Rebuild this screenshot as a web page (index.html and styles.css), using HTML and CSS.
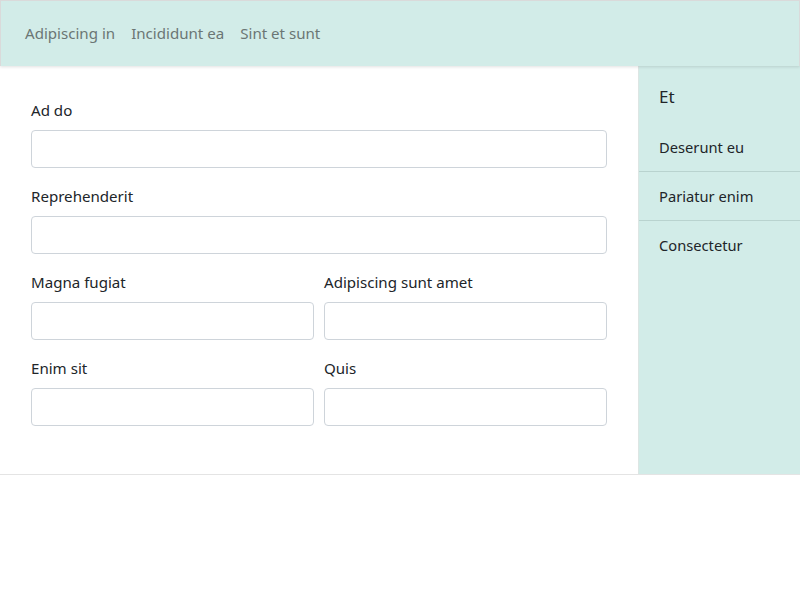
FILE: index.html
```html
<!DOCTYPE html>
<html lang="la">
<head>
<meta charset="utf-8">
<title>Form</title>
<link rel="stylesheet" href="styles.css">
</head>
<body>
<header class="topbar">
  <nav class="nav">
    <a class="nav-link" href="#">Adipiscing in</a>
    <a class="nav-link" href="#">Incididunt ea</a>
    <a class="nav-link" href="#">Sint et sunt</a>
  </nav>
</header>
<div class="layout">
  <main class="content">
    <div class="group">
      <label class="label">Ad do</label>
      <input class="input" type="text">
    </div>
    <div class="group">
      <label class="label">Reprehenderit</label>
      <input class="input" type="text">
    </div>
    <div class="row">
      <div class="group">
        <label class="label">Magna fugiat</label>
        <input class="input" type="text">
      </div>
      <div class="group">
        <label class="label">Adipiscing sunt amet</label>
        <input class="input" type="text">
      </div>
    </div>
    <div class="row">
      <div class="group">
        <label class="label">Enim sit</label>
        <input class="input" type="text">
      </div>
      <div class="group">
        <label class="label">Quis</label>
        <input class="input" type="text">
      </div>
    </div>
  </main>
  <aside class="sidebar">
    <h2 class="side-title">Et</h2>
    <ul class="side-list">
      <li class="side-item">Deserunt eu</li>
      <li class="side-item">Pariatur enim</li>
      <li class="side-item">Consectetur</li>
    </ul>
  </aside>
</div>
</body>
</html>
```
FILE: styles.css
```css
* { box-sizing: border-box; }
html, body { margin: 0; padding: 0; }
body {
  font-family: "Segoe UI", "Noto Sans", "Open Sans", sans-serif;
  font-size: 15.1px;
  line-height: 24px;
  color: #212529;
  background: #fff;
}
.topbar {
  height: 66px;
  background: #d2ece8;
  border: 1px solid #dadada;
  border-bottom: none;
  display: flex;
  align-items: center;
  padding: 0 16px 2px 16px;
  box-shadow: 0 1px 3px rgba(0,0,0,0.12);
  position: relative;
  z-index: 2;
}
.nav { display: flex; }
.nav-link {
  color: #6b7674;
  text-decoration: none;
  padding: 0 8px;
}
.layout {
  display: flex;
  border-bottom: 1px solid #e4e4e4;
  box-shadow: 0 2px 2px rgba(0,0,0,0.05);
  background: #fff;
}
.content {
  flex: 1;
  padding: 32px 31px 32px 31px;
}
.group {
  display: flex;
  flex-direction: column;
  margin-bottom: 16px;
}
.label {
  margin-bottom: 8px;
  line-height: 24px;
}
.input {
  height: 38px;
  border: 1px solid #ced4da;
  border-radius: 4px;
  background: #fff;
  font: inherit;
  padding: 6px 12px;
}
.row {
  display: grid;
  grid-template-columns: 1fr 1fr;
  column-gap: 10px;
}
.sidebar {
  width: 162px;
  background: #d2ece8;
  border-left: 1px solid #dde6e4;
}
.side-title {
  margin: 0;
  font-size: 17px;
  font-weight: 400;
  line-height: 27px;
  padding: 17px 20px 13px 20px;
}
.side-list {
  list-style: none;
  margin: 0;
  padding: 0;
}
.side-item {
  padding: 12px 20px 12px 20px;
  font-size: 14.7px;
  line-height: 24px;
  border-bottom: 1px solid #b9d3cf;
}
.side-item:last-child { border-bottom: none; }
```
